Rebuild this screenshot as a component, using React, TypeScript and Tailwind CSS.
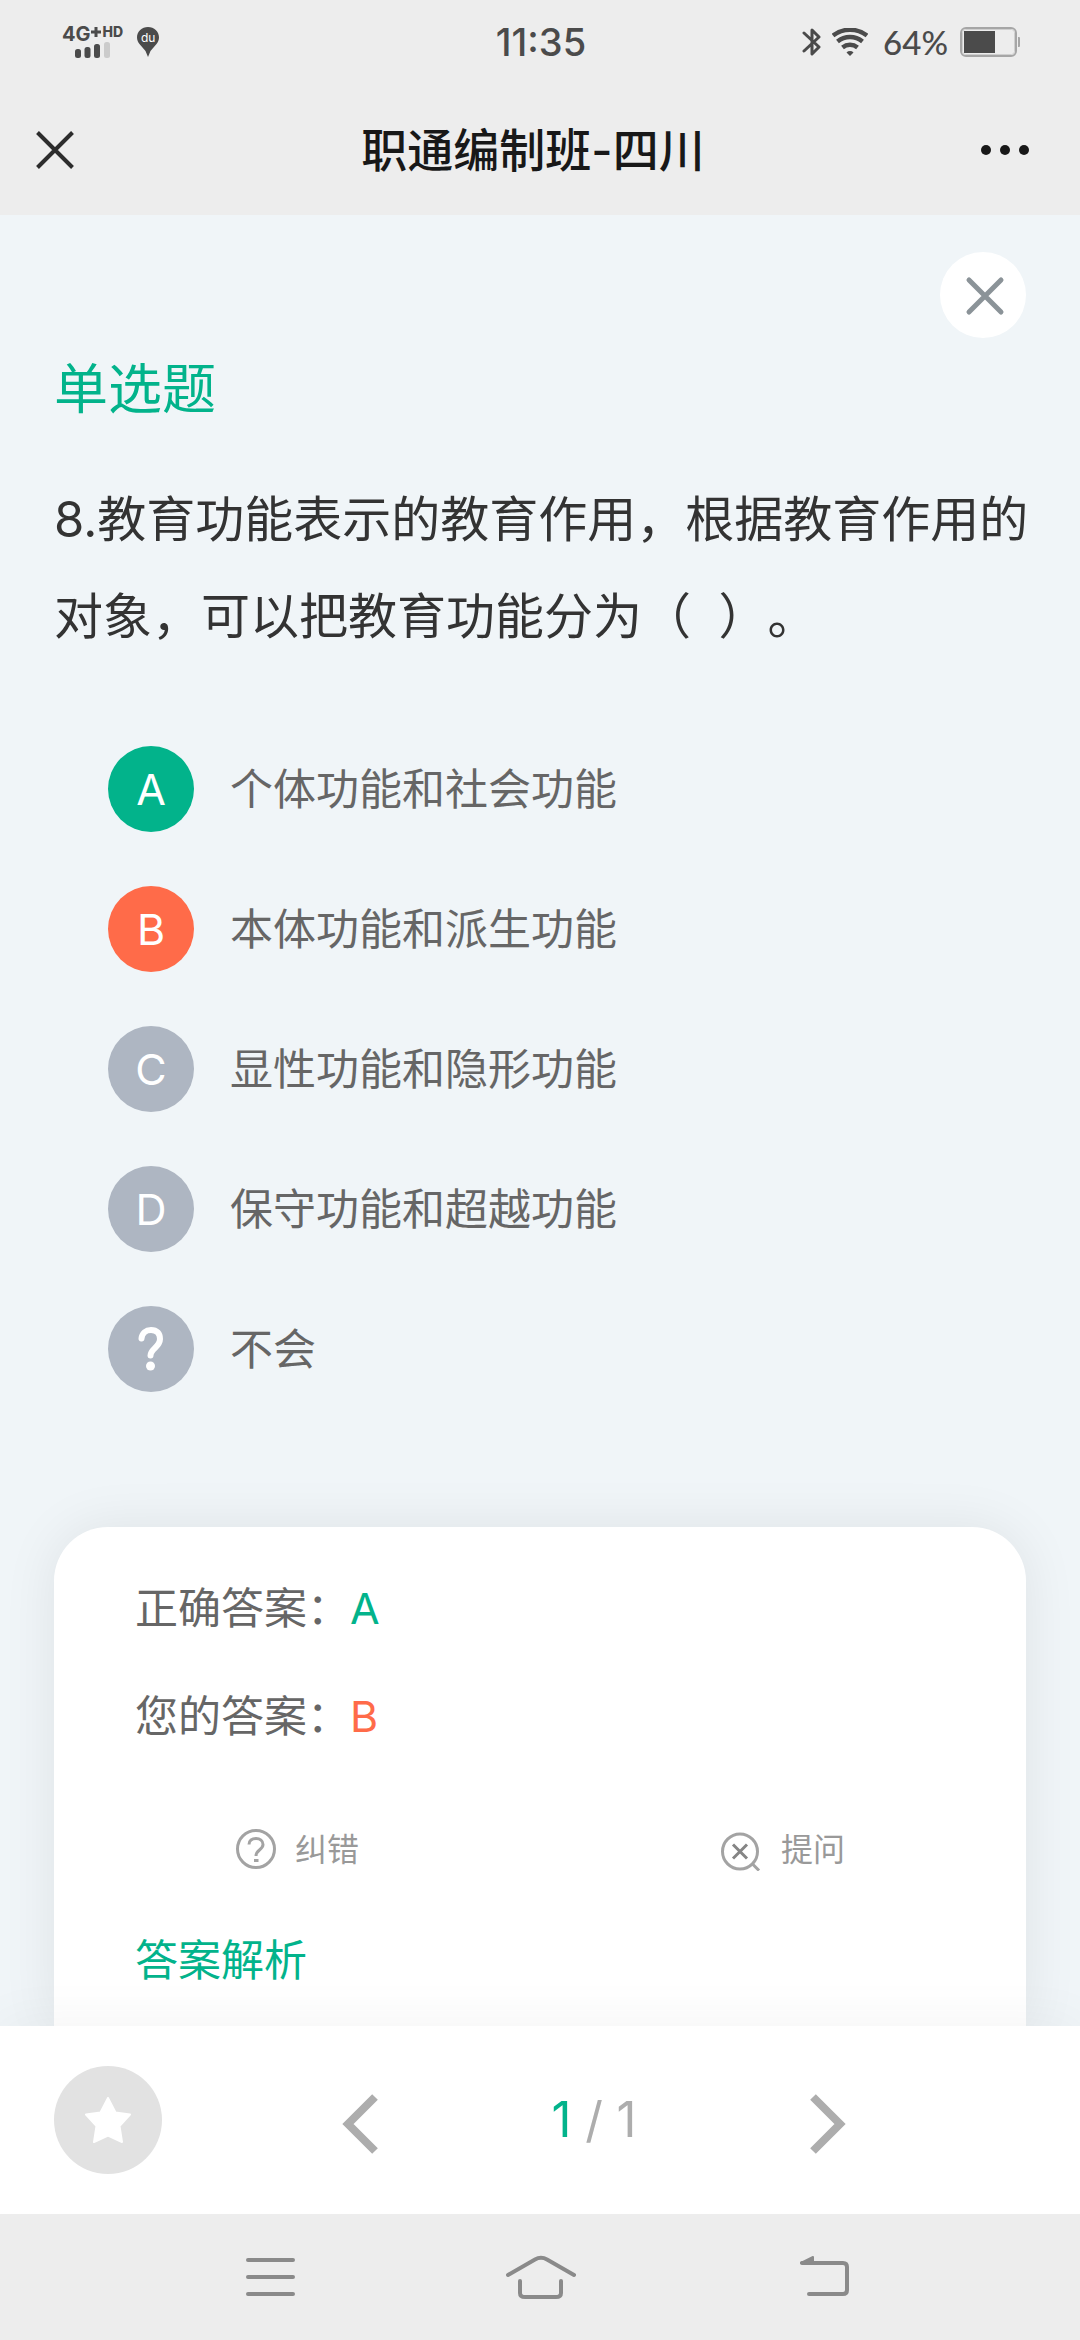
type Option = { key: string; text: string; tone: "correct" | "wrong" | "idle" };

const options: Option[] = [
  { key: "A", text: "个体功能和社会功能", tone: "correct" },
  { key: "B", text: "本体功能和派生功能", tone: "wrong" },
  { key: "C", text: "显性功能和隐形功能", tone: "idle" },
  { key: "D", text: "保守功能和超越功能", tone: "idle" },
  { key: "?", text: "不会", tone: "idle" },
];

const toneClass = {
  correct: "bg-[#02b38b]",
  wrong: "bg-[#ff6b49]",
  idle: "bg-[#aeb6c2]",
};

function StatusBar() {
  return (
    <div className="grid h-[84px] grid-cols-[1fr_auto_1fr] items-center pr-[60px] pl-[62px] text-[#4b4b4b]">
      <div className="flex items-center gap-[14px]">
        <div className="flex flex-col items-center">
          <div className="flex items-start font-bold">
            <span className="text-[20px] leading-4">4G</span>
            <svg className="mt-px h-[10px] w-[10px]" viewBox="0 0 10 10" aria-hidden="true">
              <path d="M5 0v10M0 5h10" stroke="currentColor" strokeWidth="3" />
            </svg>
            <span className="ml-[2px] text-[14px] leading-[12px] font-extrabold">HD</span>
          </div>
          <svg className="h-[16px] w-[36px]" viewBox="0 0 36 16" fill="currentColor" aria-hidden="true">
            <rect x="0" y="7" width="6" height="9" rx="2.5" />
            <rect x="9.500" y="5" width="6" height="11" rx="2.500" />
            <rect x="19" y="2" width="6" height="14" rx="2.500" />
            <rect x="29" y="0" width="6" height="16" rx="2.500" fill="#cbcbcb" />
          </svg>
        </div>
        <div className="relative h-[30px] w-[22px]">
          <svg className="h-full w-full" viewBox="0 0 22 30" fill="currentColor" aria-hidden="true">
            <path d="M11 0C4.900 0 0 4.600 0 10.300c0 2.700 1 5 2.700 7L8.500 24 11 30l2.500-6 5.800-6.700c1.700-2 2.700-4.300 2.700-7C22 4.600 17.100 0 11 0Z" />
          </svg>
          <span className="absolute inset-x-0 top-[4px] text-center text-[12px] leading-[13px] text-white">du</span>
        </div>
      </div>
      <time className="text-[38px] leading-[42px] font-medium">11:35</time>
      <div className="flex items-center justify-end">
        <svg className="h-[30px] w-[20px]" viewBox="0 0 20 30" fill="none" stroke="currentColor" strokeWidth="3" strokeLinejoin="round" strokeLinecap="round" aria-hidden="true">
          <path d="M2 6l15 14-7 7V3l7 7L2 24" />
        </svg>
        <svg className="ml-[10px] h-[28px] w-[36px]" viewBox="0 0 36 28" fill="none" stroke="currentColor" strokeWidth="4.500" aria-hidden="true">
          <path d="M1 7.500a28 28 0 0 1 34 0M5.500 13.500a20 20 0 0 1 25 0M10.500 19.500a12 12 0 0 1 15 0" />
          <path d="M14.500 24.500a5 5 0 0 1 7 0L18 28Z" fill="currentColor" stroke="none" />
        </svg>
        <span className="ml-[15px] font-[Lato,sans-serif] text-[33px] leading-[42px] font-medium">64%</span>
        <svg className="ml-[12px] h-[30px] w-[60px]" viewBox="0 0 60 30" fill="none" aria-hidden="true">
          <rect x="1" y="1" width="55" height="28" rx="5" stroke="#a6a6a6" strokeWidth="2" />
          <rect x="2.500" y="2.500" width="52" height="25" rx="3" stroke="#cfcfcf" strokeWidth="1" />
          <rect x="4" y="4" width="31" height="22" fill="#4b4b4b" />
          <path d="M58 10h1a1 1 0 0 1 1 1v8a1 1 0 0 1-1 1h-1Z" fill="#a6a6a6" />
        </svg>
      </div>
    </div>
  );
}

function TitleBar() {
  return (
    <div className="flex h-[131px] items-center justify-between pr-[48px] pl-[36px]">
      <button type="button" aria-label="关闭页面" className="w-[70px]">
        <svg className="h-[38px] w-[38px]" viewBox="0 0 38 38" stroke="#2c2c2c" strokeWidth="4" aria-hidden="true">
          <path d="M1.500 1.500l35 35M36.500 1.500l-35 35" />
        </svg>
      </button>
      <h1 className="text-[46px] leading-[60px] font-medium text-[#181818]">职通编制班-四川</h1>
      <button type="button" aria-label="更多" className="flex w-[72px] justify-end">
        <svg className="h-[10px] w-[52px]" viewBox="0 0 52 10" fill="#181818" aria-hidden="true">
          <circle cx="6" cy="5" r="5" />
          <circle cx="25" cy="5" r="5" />
          <circle cx="44" cy="5" r="5" />
        </svg>
      </button>
    </div>
  );
}

function AnswerCard() {
  return (
    <section className="mt-[135px] flex-1 rounded-t-[54px] bg-white px-[81px] pt-[54px] text-[43px] leading-[54px] text-[#666] shadow-[0_0_54px_rgba(0,0,0,0.08)]">
      <p>
        正确答案：<span className="text-[#02b38b]">A</span>
      </p>
      <p className="mt-[54px]">
        您的答案：<span className="text-[#ff6b49]">B</span>
      </p>
      <div className="-mx-[81px] mt-[86px] grid grid-cols-2 text-[32px] leading-[42px] text-[#999]">
        <button type="button" className="flex items-center justify-center gap-[18px]">
          <svg className="h-[42px] w-[42px]" viewBox="0 0 42 42" fill="none" stroke="#a3a3a3" strokeWidth="3" aria-hidden="true">
            <circle cx="21" cy="20" r="18.500" />
            <path d="M14 15.500c0-4 3-6 7-6s7 2.300 7 6c0 5.500-7 5-7 11.500M19 31.500h4.500" />
          </svg>
          纠错
        </button>
        <button type="button" className="flex items-center justify-center gap-[20px]">
          <svg className="h-[42px] w-[40px]" viewBox="0 0 40 42" fill="none" stroke="#a3a3a3" strokeWidth="3" aria-hidden="true">
            <circle cx="19" cy="22.500" r="17.500" />
            <path d="M31.500 35l6.500 6.500" />
            <path d="M12 15.500l14 14M26 15.500l-14 14" stroke="#858585" />
          </svg>
          提问
        </button>
      </div>
      <h3 className="mt-[62px] text-[#02b38b]">答案解析</h3>
    </section>
  );
}

function PagerBar() {
  return (
    <footer className="z-10 flex h-[188px] shrink-0 items-center bg-white px-[54px] shadow-[0_0_54px_rgba(0,0,0,0.05)]">
      <button type="button" aria-label="收藏" className="flex h-[108px] w-[108px] shrink-0 items-center justify-center rounded-full bg-[#e2e2e2]">
        <svg className="h-[46px] w-[46px]" viewBox="0 0 46 46" fill="#fff" stroke="#fff" strokeWidth="2" strokeLinejoin="round" aria-hidden="true">
          <path d="M23 1l7.500 14.500L45 17.500 34.500 29 37 45 23 38.500 9 45l2.500-16L1 17.500l14.500-2Z" />
        </svg>
      </button>
      <nav aria-label="题目翻页" className="grid flex-1 grid-cols-3 items-center justify-items-center px-[81px]">
        <button type="button" aria-label="上一题">
          <svg className="mt-[8px] h-[62px] w-[36px]" viewBox="0 0 36 62" fill="none" stroke="#adadad" strokeWidth="8" aria-hidden="true">
            <path d="M33 4L6 31l27 27" />
          </svg>
        </button>
        <p className="text-[49px] leading-[60px] whitespace-nowrap text-[#adadad]">
          <span className="text-[#02b38b]">1</span> / 1
        </p>
        <button type="button" aria-label="下一题">
          <svg className="mt-[8px] h-[62px] w-[36px]" viewBox="0 0 36 62" fill="none" stroke="#adadad" strokeWidth="8" aria-hidden="true">
            <path d="M3 4l27 27L3 58" />
          </svg>
        </button>
      </nav>
    </footer>
  );
}

function SystemNav() {
  return (
    <nav aria-label="系统导航" className="z-10 grid h-[126px] shrink-0 grid-cols-3 items-center justify-items-center bg-[#ededed] px-[135px] text-[#8a8a8a]">
      <button type="button" aria-label="最近任务">
        <svg className="h-[44px] w-[50px]" viewBox="0 0 50 44" stroke="currentColor" strokeWidth="4" strokeLinecap="round" aria-hidden="true">
          <path d="M3 5h45M3 22h45M3 39h45" />
        </svg>
      </button>
      <button type="button" aria-label="主屏幕">
        <svg className="h-[44px] w-[72px]" viewBox="0 0 72 44" fill="none" stroke="currentColor" strokeWidth="4" strokeLinecap="round" aria-hidden="true">
          <path d="M4 20L31 4.500Q37 1 43 4.500L70 20" />
          <path d="M16 26v12q0 4 5 4h31q5 0 5-4V26" />
        </svg>
      </button>
      <button type="button" aria-label="返回">
        <svg className="h-[44px] w-[80px]" viewBox="0 0 80 44" fill="none" stroke="currentColor" strokeWidth="4" strokeLinecap="round" aria-hidden="true">
          <path d="M32 8h41q4 0 4 4v23q0 4-4 4H39" />
          <path d="M31 8l12-6v6Z" fill="currentColor" strokeWidth="2" strokeLinejoin="round" />
        </svg>
      </button>
    </nav>
  );
}

export default function App() {
  return (
    <div lang="zh-CN" className="flex h-screen flex-col overflow-hidden bg-[#f0f5f8] font-[Inter,'Noto_Sans_CJK_SC',sans-serif]">
      <header className="shrink-0 bg-[#ededed]">
        <StatusBar />
        <TitleBar />
      </header>
      <main className="flex min-h-0 flex-1 flex-col overflow-hidden px-[54px] pt-[37px]">
        <button type="button" aria-label="关闭题目" className="flex h-[86px] w-[86px] shrink-0 items-center justify-center self-end rounded-full bg-white">
          <svg className="mt-[2px] ml-[4px] h-[40px] w-[40px]" viewBox="0 0 40 40" stroke="#8b9398" strokeWidth="5" strokeLinecap="round" aria-hidden="true">
            <path d="M4 4l32 32M36 4L4 36" />
          </svg>
        </button>
        <h2 className="mt-[25px] text-[54px] leading-[54px] text-[#02b38b]">单选题</h2>
        <p className="-mr-[8px] mt-[54px] text-[49px] leading-[97px] text-[#333] [text-spacing-trim:space-all]">
          8.教育功能表示的教育作用，根据教育作用的对象，可以把教育功能分为（&nbsp;&nbsp;）。
        </p>
        <ul className="mt-[81px] flex flex-col gap-[54px] px-[54px]">
          {options.map((o) => (
            <li key={o.key}>
              <button type="button" className="flex items-center gap-[36px] text-[43px] leading-[54px] text-[#666]">
                <span className={`flex h-[86px] w-[86px] items-center justify-center rounded-full text-white ${toneClass[o.tone]}`}>
                  {o.key === "?" ? (
                    <svg className="h-[44px] w-[26px]" viewBox="0 0 26 44" fill="none" stroke="#fff" strokeWidth="6" strokeLinecap="round" aria-label="?">
                      <path d="M3.500 11.500C4 6 8 3 13 3c6 0 9 3.500 9 9 0 8-9.500 10-9.500 16.500" />
                      <circle cx="12.500" cy="39" r="4.500" fill="#fff" stroke="none" />
                    </svg>
                  ) : (
                    o.key
                  )}
                </span>
                {o.text}
              </button>
            </li>
          ))}
        </ul>
        <AnswerCard />
      </main>
      <PagerBar />
      <SystemNav />
    </div>
  );
}
